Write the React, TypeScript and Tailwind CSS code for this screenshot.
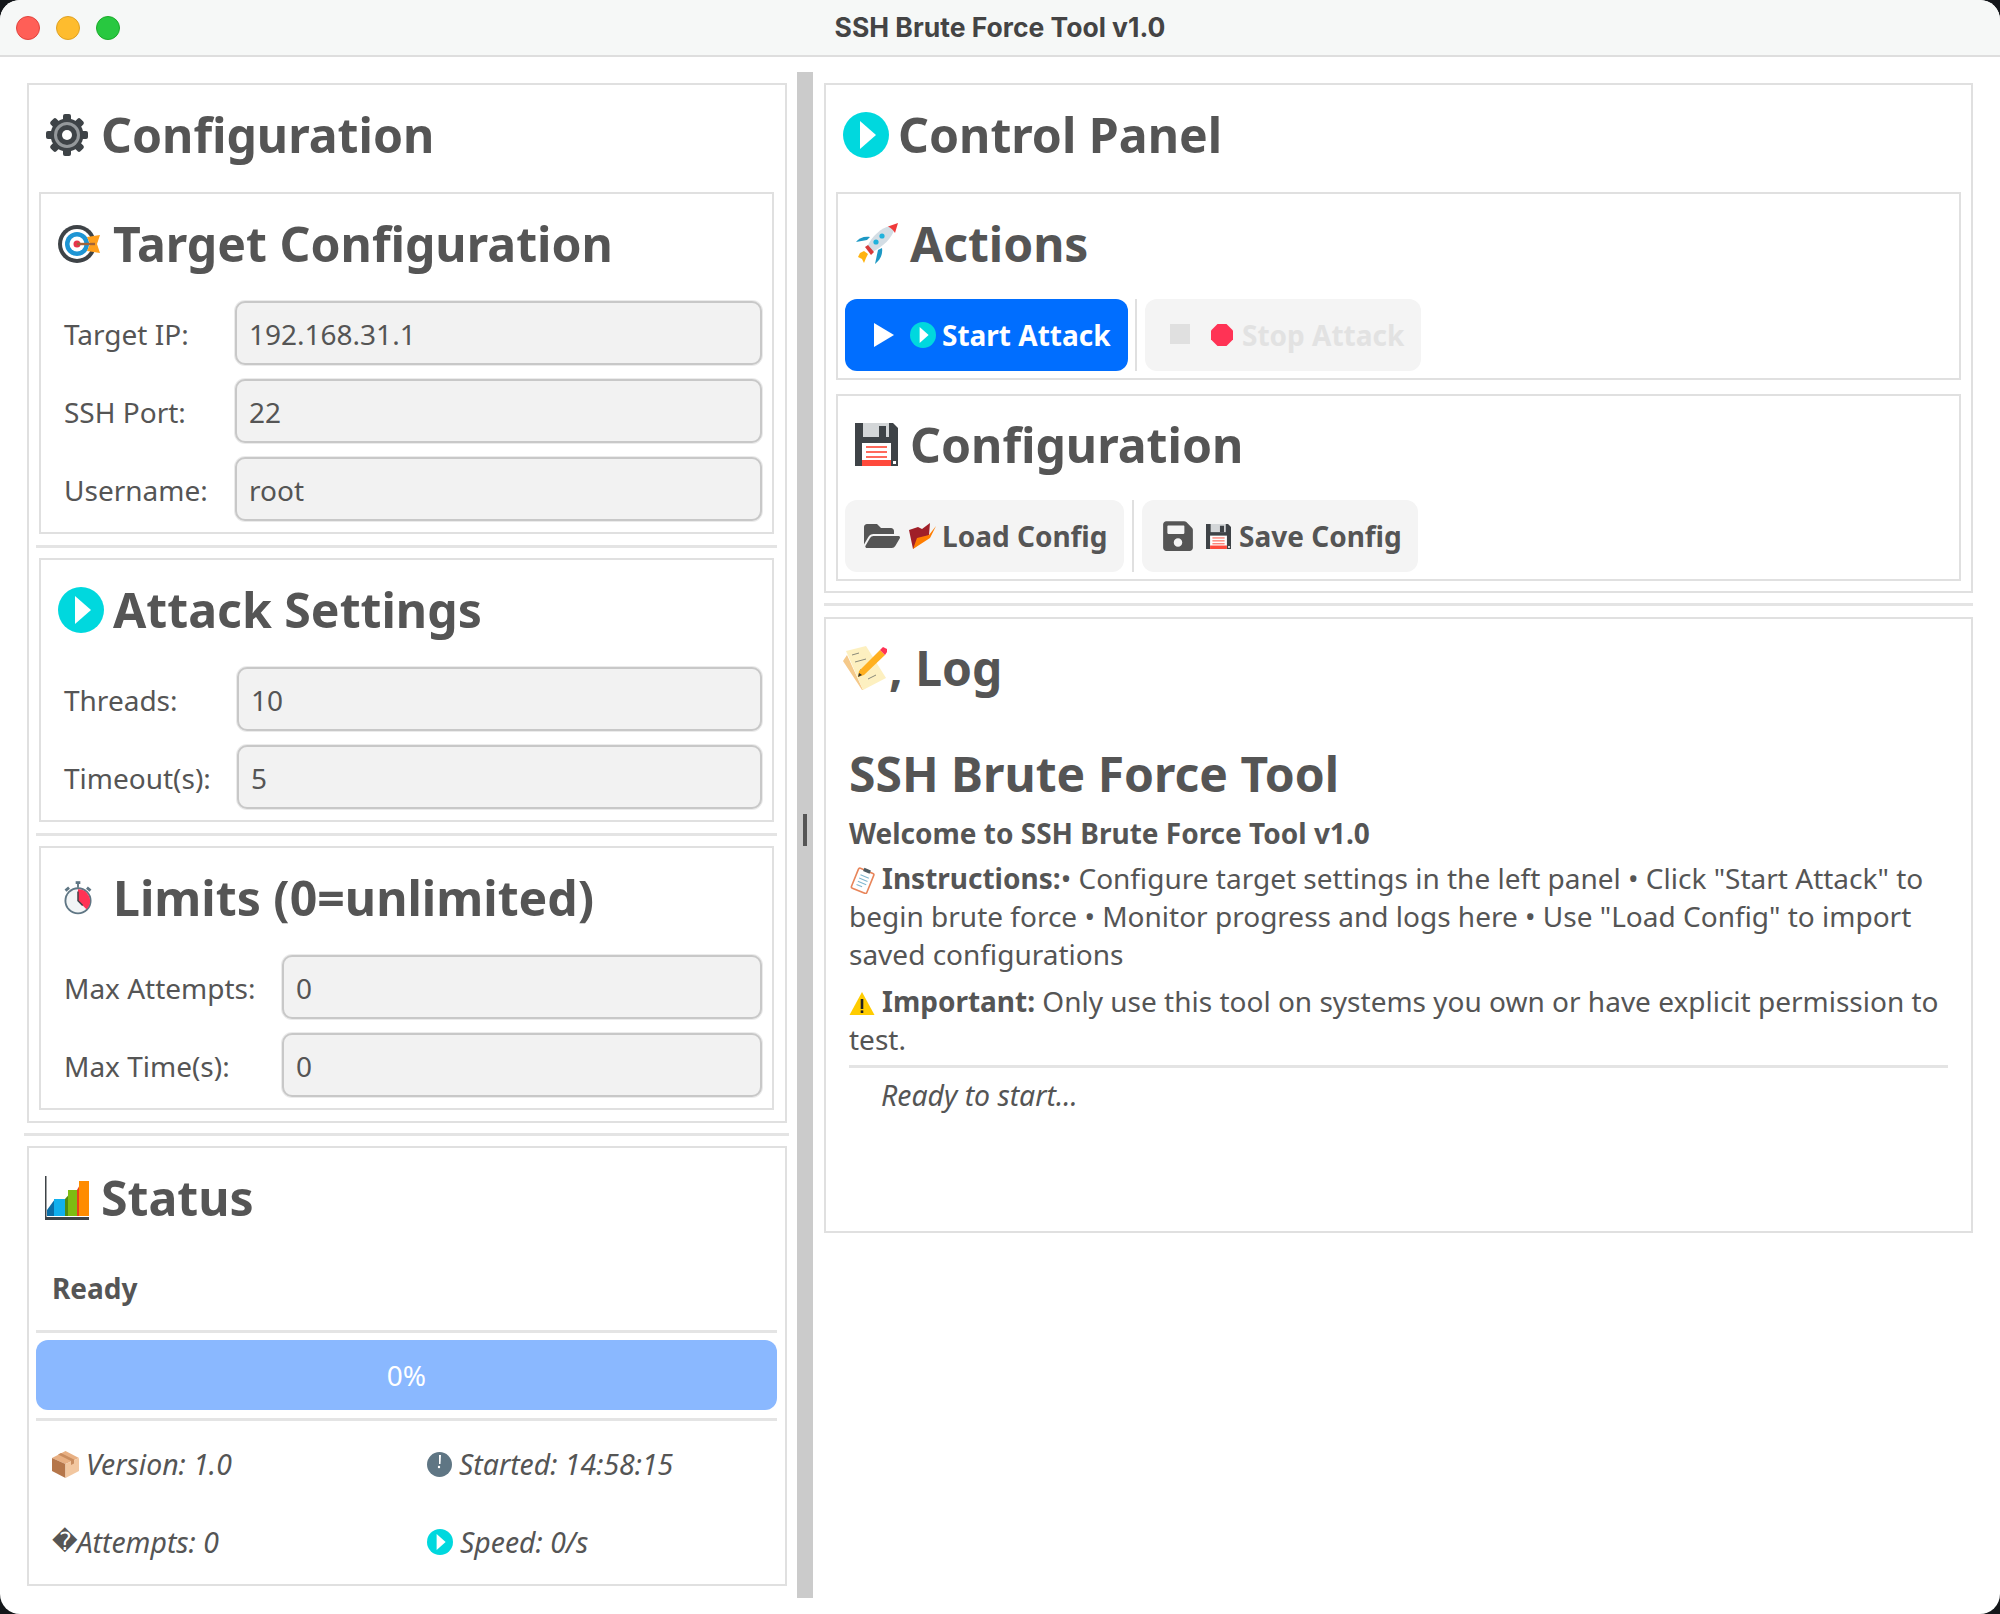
import { ReactNode } from 'react';
import { FaFolderOpen, FaSave } from 'react-icons/fa';

/* ─── Emoji drawings ─── */
const PlayCircle = ({ className }: { className: string }) => (
  <svg className={className} viewBox="0 0 46 46">
    <circle cx="23" cy="23" r="23" fill="#00d8de" />
    <polygon points="17,9 33,23 17,37" fill="#fff" />
  </svg>
);

const Gear = () => {
  const teeth = [0, 45, 90, 135, 180, 225, 270, 315];
  return (
    <svg className="w-[42px] h-[42px] shrink-0" viewBox="0 0 42 42">
      {teeth.map((a) => (
        <rect key={a} x="17" y="0" width="8" height="10" rx="2" fill="#3e4347" transform={`rotate(${a} 21 21)`} />
      ))}
      <circle cx="21" cy="21" r="16.5" fill="#3e4347" />
      <circle cx="21" cy="21" r="13" fill="#94989b" />
      <circle cx="21" cy="21" r="10" fill="#3e4347" />
      <circle cx="21" cy="21" r="5" fill="#fff" />
    </svg>
  );
};

const Target = () => (
  <svg className="w-[42px] h-[42px] shrink-0" viewBox="0 0 42 42">
    <circle cx="19" cy="21" r="19" fill="#3e4347" />
    <circle cx="19" cy="21" r="15" fill="#fff" />
    <circle cx="19" cy="21" r="12" fill="#1e95d4" />
    <circle cx="19" cy="21" r="7.5" fill="#fff" />
    <circle cx="19" cy="21" r="3.5" fill="#e8354d" />
    <polygon points="29,14 42,12 39,21 42,30 29,28 32,21" fill="#ff9f1c" />
    <rect x="19" y="19.8" width="18" height="2.4" fill="#a1643a" />
  </svg>
);

const Stopwatch = () => (
  <svg className="w-[28px] h-[36px] shrink-0 ml-[6px]" viewBox="0 0 30 36">
    <rect x="12.5" y="0" width="5" height="3" fill="#5f7684" />
    <rect x="14" y="2" width="2" height="5" fill="#5f7684" />
    <rect x="1" y="7" width="5" height="3" fill="#5f7684" transform="rotate(-40 3.5 8.5)" />
    <rect x="24" y="7" width="5" height="3" fill="#5f7684" transform="rotate(40 26.5 8.5)" />
    <circle cx="15" cy="21" r="14.5" fill="#5f7684" />
    <circle cx="15" cy="21" r="12.5" fill="#f2f5f6" />
    <path d="M15 8.5 A12.5 12.5 0 0 1 24 30 L15 21 Z" fill="#ff3355" />
    <path d="M15 11 L15 21 L20 26" stroke="#3e4347" strokeWidth="1.6" fill="none" />
  </svg>
);

const Bars = () => (
  <svg className="w-[44px] h-[44px] shrink-0" viewBox="0 0 44 44">
    <polygon points="2,40 2,34 10,23 20,23 20,40" fill="#0a6ea8" />
    <rect x="9" y="23" width="11" height="17" fill="#10b0ee" />
    <polygon points="20,23 28,14 32,14 32,40 20,40" fill="#4f8a10" />
    <rect x="23" y="14" width="9" height="26" fill="#7ebc12" />
    <polygon points="32,14 37,5 44,5 44,40 32,40" fill="#e8401c" />
    <rect x="34" y="5" width="10" height="35" fill="#ff8c00" />
    <rect x="0" y="0" width="1.5" height="44" fill="#3e4347" />
    <rect x="0" y="41" width="44" height="3" fill="#3e4347" />
  </svg>
);

const Rocket = () => (
  <svg className="w-[43px] h-[42px] shrink-0" viewBox="0 0 43 42">
    <path d="M12 17 L1 19 C4 15 9 13 15 14 Z" fill="#1d98c4" />
    <path d="M23 27 L20 41 C25 37 28 32 27 25 Z" fill="#1d98c4" />
    <path d="M35 3 C26 5 17 13 12 24 L17 29 C28 24 37 15 40 5 Z" fill="#d3dde4" />
    <path d="M33 3.5 L43 0 L40 10 C38.5 7 36 5 33 3.5 Z" fill="#f03a3a" />
    <circle cx="27" cy="13" r="2.6" fill="#1fb2dc" />
    <circle cx="21" cy="19" r="2.6" fill="#1fb2dc" />
    <path d="M10 24 L13 22 L19 29 L16 32 Z" fill="#d83a3a" />
    <path d="M3 34 L5 30 L9 28 L13 31 L11 35 L9 40 L7 36 Z" fill="#ffb310" />
  </svg>
);

const Floppy = ({ className }: { className: string }) => (
  <svg className={className} viewBox="0 0 43 43">
    <path d="M0 0 H38 L43 5 V43 H0 Z" fill="#3e4347" />
    <rect x="8" y="0" width="26" height="14" fill="#d3d6d8" />
    <rect x="24" y="3" width="7" height="11" fill="#3e4347" />
    <rect x="7" y="20" width="29" height="23" fill="#fff" />
    <rect x="7" y="37" width="29" height="6" fill="#ff4a3c" />
    <rect x="11" y="23" width="21" height="2" fill="#ff6a5c" />
    <rect x="11" y="28" width="21" height="2" fill="#ff6a5c" />
    <rect x="11" y="33" width="21" height="2" fill="#ff6a5c" />
    <rect x="38" y="38" width="3" height="3" fill="#fff" />
  </svg>
);

const FlameFolder = () => (
  <svg className="w-[27px] h-[26px] shrink-0" viewBox="0 0 27 26">
    <path d="M0 7 L9 4 L13 6 L21 0 L20 12 L4 26 Z" fill="#a01f28" />
    <path d="M4 26 L8 15 L20 12 L27 3 L21 15 Z" fill="#ff7d00" />
  </svg>
);

const Memo = () => (
  <svg className="w-[47px] h-[45px] shrink-0" viewBox="0 0 45 45">
    <polygon points="1,15 5,9 21,44 20,44" fill="#f5c98a" />
    <polygon points="4,5 24,0 44,32 21,44" fill="#fdf0c0" />
    <path d="M10 9 L17 7 M13 16 L24 13 M18 24 L24 22 M26 33 L34 29" stroke="#8a8a7a" strokeWidth="1" />
    <polygon points="17,25 38,4 43,9 22,29 16,31" fill="#ffb020" />
    <polygon points="38,4 41,1 45,3 45,6 43,9" fill="#ff3355" />
    <polygon points="16,31 17,27 20,29" fill="#333" />
  </svg>
);

const Clipboard = () => (
  <svg className="w-[27px] h-[27px]" viewBox="0 0 26 27">
    <g transform="rotate(22 13 13.5)">
      <rect x="5" y="3" width="16.5" height="21.5" rx="1.5" fill="#fff" stroke="#e8855a" strokeWidth="1.6" />
      <rect x="10" y="1" width="7" height="3.5" fill="#4d5a60" />
      <path d="M9 9 H18 M9 12.5 H18 M9 16 H18 M9 19.5 H15" stroke="#7fb6cf" strokeWidth="1" />
    </g>
  </svg>
);

const Warning = () => (
  <svg className="w-[26px] h-[25px]" viewBox="0 0 25 25">
    <polygon points="12.5,1 25,24 0,24" fill="#ffcc00" />
    <rect x="11.2" y="8" width="2.6" height="10" fill="#222" />
    <rect x="11.2" y="19.4" width="2.6" height="2.6" fill="#222" />
  </svg>
);

const Box = () => (
  <svg className="w-[27px] h-[27px] shrink-0" viewBox="0 0 27 27">
    <polygon points="13.5,0 27,7 13.5,13 0,7" fill="#e8b083" />
    <polygon points="0,7 13.5,13 13.5,27 0,20" fill="#b5764a" />
    <polygon points="27,7 13.5,13 13.5,27 27,20" fill="#f2c7a0" />
    <polygon points="6,3.5 19,10 19,14 22,12.5 22,8.5 9,2" fill="#c98d5f" />
  </svg>
);

const Clock = () => (
  <svg className="w-[25px] h-[25px] shrink-0" viewBox="0 0 25 25">
    <circle cx="12.5" cy="12.5" r="12.5" fill="#5f7684" />
    <polygon points="12,3 14,3 13.5,12 12,12" fill="#fff" />
    <circle cx="12" cy="15" r="1.2" fill="#fff" />
  </svg>
);

/* ─── Panels ─── */
const Separator = ({ className }: { className: string }) => <div className={`h-[3px] bg-[#e4e4e4] ${className}`} />;

const Heading = ({ icon, title, className }: { icon: ReactNode; title: string; className: string }) => (
  <div className={`flex items-center h-[107px] pb-[8px] text-[48.2px] leading-none font-bold ${className}`}>
    {icon}
    <span className="whitespace-nowrap">{title}</span>
  </div>
);

const Field = ({ label, value, labelWidth }: { label: string; value: string; labelWidth: string }) => (
  <div className="flex items-center h-[64px]">
    <span className={`text-[28px] pl-[13px] pt-[2px] shrink-0 ${labelWidth}`}>{label}</span>
    <div className="flex-1 h-full flex items-center pl-[12px] pt-[2px] bg-[#f2f2f2] border-2 border-[#c8c8c8] rounded-[10px] text-[28px] shadow-[0_0_0_1px_#ebebeb]">
      {value}
    </div>
  </div>
);

const Group = ({ icon, title, gap, labelWidth, fields }: {
  icon: ReactNode;
  title: string;
  gap: string;
  labelWidth: string;
  fields: string[][];
}) => (
  <div className="border-2 border-[#e0e0e0] pl-[10px] pr-[10px] pb-[11px]">
    <Heading icon={icon} title={title} className={`pl-[7px] ${gap}`} />
    <div className="flex flex-col gap-[14px]">
      {fields.map(([label, value]) => (
        <Field key={label} label={label} value={value} labelWidth={labelWidth} />
      ))}
    </div>
  </div>
);

const Stat = ({ icon, text, className }: { icon: ReactNode; text: string; className: string }) => (
  <div className={`flex items-center italic text-[28.4px] h-[78px] ${className}`}>
    {icon}
    <span>{text}</span>
  </div>
);

export default function App() {
  return (
    <div className="w-[2000px] h-[1614px] bg-[#14171a] font-['Noto_Sans',sans-serif] text-[#555555]">
      <div className="w-full h-full bg-white rounded-[20px] overflow-hidden flex flex-col">
        {/* Title bar */}
        <div className="relative h-[57px] shrink-0 bg-[#f6f8f7] border-b-2 border-[#dedede] flex items-center justify-center">
          <div className="absolute left-[16px] top-[16px] flex gap-[16px]">
            <div className="w-[24px] h-[24px] rounded-full bg-[#ff5f57] border border-[#e0443e]" />
            <div className="w-[24px] h-[24px] rounded-full bg-[#febc2e] border border-[#dea123]" />
            <div className="w-[24px] h-[24px] rounded-full bg-[#28c840] border border-[#1aab29]" />
          </div>
          <span className="text-[26.5px] font-bold text-[#444444] font-['Inter',sans-serif]">SSH Brute Force Tool v1.0</span>
        </div>

        <div className="flex flex-1 min-h-0">
          {/* Left column */}
          <div className="w-[765px] ml-[24px] shrink-0 pt-[26px] flex flex-col">
            <div className="ml-[3px] mr-[2px] border-2 border-[#e0e0e0] pl-[10px] pr-[11px] pb-[11px]">
              <Heading icon={<Gear />} title="Configuration" className="pl-[7px] gap-[13px]" />
              <Group
                icon={<Target />}
                title="Target Configuration"
                gap="gap-[13px]"
                labelWidth="w-[184px]"
                fields={[['Target IP:', '192.168.31.1'], ['SSH Port:', '22'], ['Username:', 'root']]}
              />
              <Separator className="-mx-[3px] mt-[11px] mb-[10px]" />
              <Group
                icon={<PlayCircle className="w-[46px] h-[46px] shrink-0" />}
                title="Attack Settings"
                gap="gap-[9px]"
                labelWidth="w-[186px]"
                fields={[['Threads:', '10'], ['Timeout(s):', '5']]}
              />
              <Separator className="-mx-[3px] mt-[11px] mb-[10px]" />
              <Group
                icon={<Stopwatch />}
                title="Limits (0=unlimited)"
                gap="gap-[21px]"
                labelWidth="w-[231px]"
                fields={[['Max Attempts:', '0'], ['Max Time(s):', '0']]}
              />
            </div>
            <Separator className="mt-[10px] mb-[10px]" />
            <div className="ml-[3px] mr-[2px] border-2 border-[#e0e0e0] h-[440px] flex flex-col">
              <Heading icon={<Bars />} title="Status" className="pl-[16px] gap-[12px]" />
              <div className="h-[75px] pl-[23px] pt-[12px] text-[28px] font-bold">Ready</div>
              <div className="ml-[7px] mr-[8px] flex flex-col">
                <Separator className="" />
                <div className="mt-[7px] h-[70px] rounded-[12px] bg-[#8ab8ff] flex items-center justify-center text-white text-[28px]">
                  0%
                </div>
                <Separator className="mt-[8px]" />
              </div>
              <div className="grid grid-cols-[375px_1fr] pl-[23px] mt-[4px]">
                <Stat icon={<Box />} text="Version: 1.0" className="gap-[7px]" />
                <Stat icon={<Clock />} text="Started: 14:58:15" className="gap-[7px]" />
                <Stat icon={<span className="not-italic font-['DejaVu_Sans',sans-serif] text-[25px] -mr-[1px]">{'\uFFFD'}</span>} text="Attempts: 0" className="" />
                <Stat icon={<PlayCircle className="w-[26px] h-[26px] shrink-0" />} text="Speed: 0/s" className="gap-[7px]" />
              </div>
            </div>
          </div>

          {/* Splitter */}
          <div className="w-[16px] ml-[8px] mt-[15px] mb-[16px] shrink-0 bg-[#cbcbcb] flex items-center justify-center">
            <div className="w-[4px] h-[32px] bg-[#555555] mb-[10px]" />
          </div>

          {/* Right column */}
          <div className="w-[1149px] ml-[11px] shrink-0 pt-[26px] flex flex-col">
            <div className="border-2 border-[#e0e0e0] px-[10px] pb-[10px]">
              <Heading icon={<PlayCircle className="w-[46px] h-[46px] shrink-0" />} title="Control Panel" className="pl-[7px] gap-[9px]" />
              <div className="border-2 border-[#e0e0e0] px-[7px] pb-[7px]">
                <div className="flex items-center h-[105px] pb-[6px] pl-[10px] gap-[12px] text-[48px] leading-none font-bold">
                  <Rocket />
                  <span>Actions</span>
                </div>
                <div className="flex h-[72px]">
                  <div className="w-[283px] bg-[#006eff] rounded-[12px] flex items-center pl-[29px] text-white text-[28px] font-bold">
                    <svg className="w-[20px] h-[24px] shrink-0" viewBox="0 0 20 24"><polygon points="0,0 20,12 0,24" fill="#fff" /></svg>
                    <PlayCircle className="w-[26px] h-[26px] shrink-0 ml-[16px]" />
                    <span className="ml-[6px] whitespace-nowrap">Start Attack</span>
                  </div>
                  <div className="w-[2px] ml-[7px] bg-[#e0e0e0]" />
                  <div className="w-[276px] ml-[8px] bg-[#f4f4f4] rounded-[12px] flex items-center pl-[25px] text-[#e2e2e2] text-[28px] font-bold">
                    <div className="w-[20px] h-[20px] bg-[#e0e0e0] mb-[3px] shrink-0" />
                    <svg className="w-[22px] h-[22px] shrink-0 ml-[21px]" viewBox="0 0 22 22"><polygon points="6.5,0 15.5,0 22,6.5 22,15.5 15.5,22 6.5,22 0,15.5 0,6.5" fill="#ff3355" /></svg>
                    <span className="ml-[9px] whitespace-nowrap">Stop Attack</span>
                  </div>
                </div>
              </div>
              <div className="border-2 border-[#e0e0e0] px-[7px] pb-[7px] mt-[14px]">
                <div className="flex items-center h-[104px] pb-[7px] pl-[10px] gap-[12px] text-[48.2px] leading-none font-bold">
                  <Floppy className="w-[43px] h-[43px] shrink-0" />
                  <span>Configuration</span>
                </div>
                <div className="flex h-[72px]">
                  <div className="w-[279px] bg-[#f4f4f4] rounded-[12px] flex items-center pl-[19px] text-[28px] font-bold">
                    <FaFolderOpen className="w-[36px] h-[32px] shrink-0" />
                    <div className="ml-[9px]"><FlameFolder /></div>
                    <span className="ml-[6px] whitespace-nowrap">Load Config</span>
                  </div>
                  <div className="w-[2px] ml-[8px] bg-[#e0e0e0]" />
                  <div className="w-[276px] ml-[8px] bg-[#f4f4f4] rounded-[12px] flex items-center pl-[21px] text-[28px] font-bold">
                    <FaSave className="w-[30px] h-[34px] shrink-0" />
                    <Floppy className="w-[25px] h-[25px] shrink-0 ml-[13px]" />
                    <span className="ml-[8px] whitespace-nowrap">Save Config</span>
                  </div>
                </div>
              </div>
            </div>
            <Separator className="mt-[10px] mb-[11px]" />
            <div className="border-2 border-[#e0e0e0] h-[616px] pl-[23px] pr-[23px]">
              <div className="flex items-center h-[98px] text-[48px] leading-none font-bold -ml-[8px]">
                <Memo />
                <span className="ml-[1px] whitespace-nowrap">, Log</span>
              </div>
              <h1 className="text-[48px] leading-none font-bold mt-[33px]">SSH Brute Force Tool</h1>
              <p className="text-[28px] font-bold leading-[38px] mt-[16px]">Welcome to SSH Brute Force Tool v1.0</p>
              <p className="text-[28px] leading-[38px] mt-[7px]">
                <span className="inline-block align-[-5px] mr-[6px]"><Clipboard /></span>
                <b>Instructions:</b>• Configure target settings in the left panel • Click "Start Attack" to begin brute force • Monitor progress and logs here • Use "Load Config" to import saved configurations
              </p>
              <p className="text-[28px] leading-[38px] mt-[9px]">
                <span className="inline-block align-[-4px] mr-[7px]"><Warning /></span>
                <b>Important:</b> Only use this tool on systems you own or have explicit permission to test.
              </p>
              <div className="h-[3px] bg-[#e4e4e4] mt-[7px]" />
              <p className="text-[28.4px] italic leading-[38px] mt-[8px] pl-[32px]">Ready to start...</p>
            </div>
          </div>
        </div>
      </div>
    </div>
  );
}
